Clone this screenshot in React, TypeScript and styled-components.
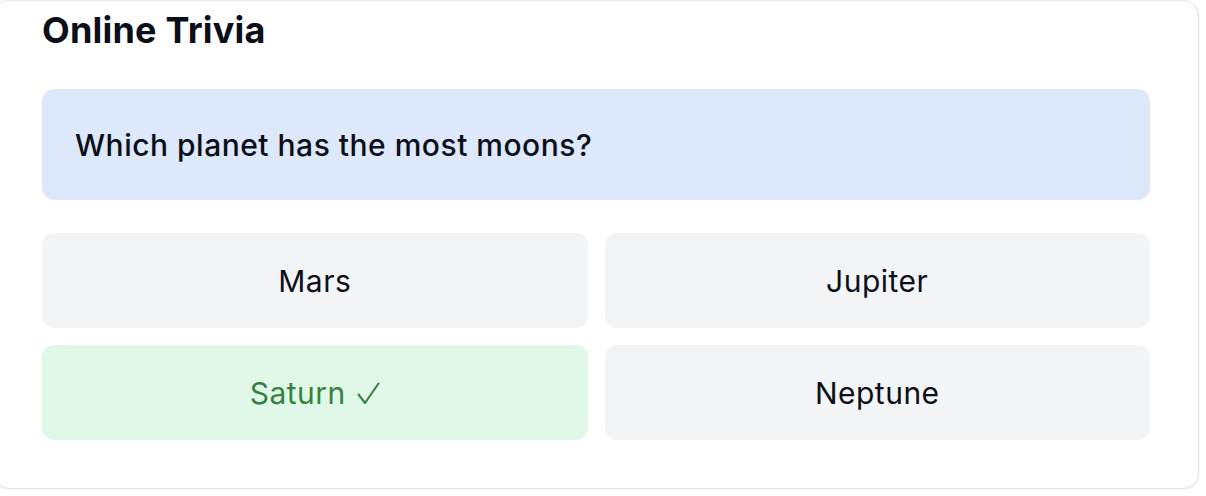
import React, { ReactElement } from 'react'
import styled, { createGlobalStyle } from 'styled-components'

const GlobalStyle = createGlobalStyle`
  body {
    margin: 0;
    background: #ffffff;
    font-family: Inter, "Noto Sans", "Liberation Sans", sans-serif;
    color: #0b0f19;
    overflow: hidden;
  }
`

const Card = styled.div`
  box-sizing: border-box;
  width: 1206px;
  margin-left: -7px;
  padding: 8px 48px 48px;
  background: #ffffff;
  border: 1px solid #e3e4ea;
  border-top-color: #e8e9ee;
  border-radius: 16px;
  box-shadow: 0 1px 3px rgba(0, 0, 0, 0.06);
`

const Title = styled.h1`
  margin: 0 0 38px;
  font-size: 36px;
  line-height: 42px;
  font-weight: 700;
  letter-spacing: 0.2px;
`

const Question = styled.div`
  display: flex;
  align-items: center;
  height: 111px;
  padding: 0 33px;
  border-radius: 12px;
  background: #dde8fa;
  font-size: 30px;
  font-weight: 500;
  letter-spacing: 0.5px;
`

const Options = styled.div`
  display: grid;
  grid-template-columns: 1fr 1fr;
  gap: 17px;
  margin-top: 33px;
`

const Option = styled.button<{ $correct?: boolean }>`
  display: flex;
  align-items: center;
  justify-content: center;
  gap: 11px;
  height: 95px;
  border: none;
  border-radius: 12px;
  background: ${(p) => (p.$correct ? '#e0f8e8' : '#f3f4f6')};
  color: ${(p) => (p.$correct ? '#37813f' : '#0b0f19')};
  font-family: inherit;
  font-size: 30px;
  font-weight: 400;
  letter-spacing: 0.5px;
  cursor: pointer;
`

const CheckMark = styled.svg`
  width: 23px;
  height: 23px;
  margin-top: 1px;
  flex: none;
`

const answers = [
  { label: 'Mars' },
  { label: 'Jupiter' },
  { label: 'Saturn', correct: true },
  { label: 'Neptune' },
]

export default function App(): ReactElement {
  return (
    <>
      <GlobalStyle />
      <Card>
        <Title>Online Trivia</Title>
        <Question>Which planet has the most moons?</Question>
        <Options>
          {answers.map((a) => (
            <Option key={a.label} $correct={a.correct}>
              {a.label}
              {a.correct && (
                <CheckMark viewBox="0 0 23 23" aria-label="correct">
                  <path
                    d="M1.5 12.5 L8 21 L21.5 1.5"
                    fill="none"
                    stroke="currentColor"
                    strokeWidth="2.1"
                    strokeLinecap="round"
                    strokeLinejoin="round"
                  />
                </CheckMark>
              )}
            </Option>
          ))}
        </Options>
      </Card>
    </>
  )
}
